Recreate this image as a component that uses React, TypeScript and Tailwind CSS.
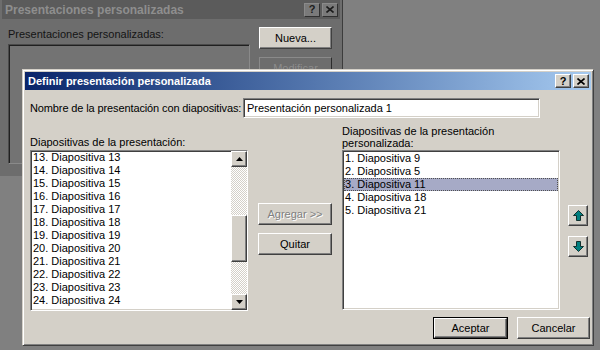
import React from "react";

const raised =
  "border border-t-white border-l-white border-r-[#404040] border-b-[#404040] shadow-[inset_-1px_-1px_#808080] bg-[#d4d0c8]";
const sunken =
  "border border-t-[#808080] border-l-[#808080] border-r-white border-b-white shadow-[inset_1px_1px_#404040,inset_-1px_-1px_#d4d0c8] bg-white";
const track =
  "bg-[repeating-conic-gradient(#ffffff_0_25%,#d4d0c8_0_50%)] bg-[length:2px_2px]";

const ScrollArrow: React.FC<{ down?: boolean }> = ({ down }) => (
  <div className={`${raised} h-[16px] flex items-center justify-center`}>
    <svg width="7" height="4" viewBox="0 0 7 4">
      {down ? <polygon points="0,0 7,0 3.5,4" fill="#000" /> : <polygon points="3.5,0 7,4 0,4" fill="#000" />}
    </svg>
  </div>
);

const MoveButton: React.FC<{ down?: boolean }> = ({ down }) => (
  <div className={`${raised} w-[20px] h-[21px] flex items-center justify-center`}>
    <svg width="11" height="11" viewBox="0 0 11 11" className={down ? "rotate-180" : ""}>
      <polygon
        points="5.5,0.5 10.5,5.5 7.5,5.5 7.5,10.5 3.5,10.5 3.5,5.5 0.5,5.5"
        fill="#008080"
        stroke="#10302e"
        strokeWidth="1"
      />
    </svg>
  </div>
);

const TitleButtons: React.FC<{ dim?: boolean }> = ({ dim }) => {
  const face = dim
    ? "border border-t-[#8a8a8a] border-l-[#8a8a8a] border-r-[#303030] border-b-[#303030] bg-[#7a7a7a]"
    : raised;
  const ink = dim ? "#1c1c1c" : "#000";
  return (
    <div className="flex items-center">
      <div className={`${face} w-[16px] h-[14px] flex items-center justify-center font-bold text-[11px] leading-none`} style={{ color: ink }}>
        ?
      </div>
      <div className={`${face} w-[16px] h-[14px] ml-[2px] flex items-center justify-center`}>
        <svg width="8" height="7" viewBox="0 0 8 7">
          <path d="M0.5 0.5 L7.5 6.5 M7.5 0.5 L0.5 6.5" stroke={ink} strokeWidth="1.6" />
        </svg>
      </div>
    </div>
  );
};

const leftItems = Array.from({ length: 12 }, (_, i) => i + 13);
const rightItems = [9, 5, 11, 18, 21];

export default function App() {
  return (
    <div className="relative w-[600px] h-[350px] overflow-hidden bg-[#808080] font-['Liberation_Sans',Arial,sans-serif] text-[11px] text-black">
      {/* background dialog, dimmed */}
      <div className="absolute left-0 top-0 w-[343px] h-[176px] bg-[#6d6d6d] border-r border-r-[#3c3c3c] px-[2px]">
        <div className="h-[19px] bg-[#5b5b5b] flex items-center justify-between pl-[3px] pr-[2px]">
          <span className="font-bold text-[12px] text-[#8e8e8e]">Presentaciones personalizadas</span>
          <TitleButtons dim />
        </div>
        <div className="flex pl-[6px] pt-[9px]">
          <div className="flex flex-col">
            <span className="text-[#141414] leading-[13px]">Presentaciones personalizadas:</span>
            <div className="mt-[3px] w-[242px] h-[120px] bg-[#737373] border border-t-[#4a4a4a] border-l-[#4a4a4a] border-r-[#8a8a8a] border-b-[#8a8a8a] shadow-[inset_1px_1px_#202020]" />
          </div>
          <div className="ml-[9px] flex flex-col gap-[8px] -mt-[1px]">
            <div className={`${raised} w-[73px] h-[22px] flex items-center justify-center`}>Nueva...</div>
            <div className="w-[73px] h-[22px] border border-t-[#8a8a8a] border-l-[#8a8a8a] border-r-[#2c2c2c] border-b-[#2c2c2c] bg-[#6d6d6d] flex items-center justify-center text-[#8c8c8c]">
              Modificar
            </div>
          </div>
        </div>
      </div>

      {/* front dialog */}
      <div className="absolute left-[22px] top-[69px] w-[572px] h-[277px] border border-t-[#d4d0c8] border-l-[#d4d0c8] border-r-[#404040] border-b-[#404040] shadow-[inset_1px_1px_#fff,inset_-1px_-1px_#808080] p-[2px] bg-[#d4d0c8] flex flex-col">
        <div className="h-[18px] bg-gradient-to-r from-[#0a246a] to-[#a6caf0] flex items-center justify-between pl-[3px] pr-[2px] shrink-0">
          <span className="font-bold text-white">Definir presentación personalizada</span>
          <TitleButtons />
        </div>

        <div className="pl-[5px] pt-[8px] flex flex-col">
          <div className="flex items-center h-[20px]">
            <span className="w-[213px] shrink-0 whitespace-nowrap tracking-[-0.12px]">Nombre de la presentación con diapositivas:</span>
            <div className={`${sunken} w-[297px] h-[20px] flex items-center pl-[3px]`}>Presentación personalizada 1</div>
          </div>

          <div className="flex">
            {/* left column */}
            <div className="flex flex-col w-[218px]">
              <div className="h-[32px] flex flex-col justify-end pb-[1px] leading-[13px]">
                <span>Diapositivas de la presentación:</span>
              </div>
              <div className={`${sunken} h-[161px] flex`}>
                <div className="flex-1 flex flex-col pl-[2px]">
                  {leftItems.map((n) => (
                    <div key={n} className="h-[13px] leading-[13px] whitespace-nowrap">
                      {n}. Diapositiva {n}
                    </div>
                  ))}
                </div>
                <div className="w-[16px] flex flex-col">
                  <ScrollArrow />
                  <div className={`${track} h-[48px]`} />
                  <div className={`${raised} h-[47px]`} />
                  <div className={`${track} flex-1`} />
                  <ScrollArrow down />
                </div>
              </div>
            </div>

            {/* middle buttons */}
            <div className="ml-[10px] w-[74px] pt-[85px] flex flex-col gap-[8px]">
              <div className={`${raised} h-[22px] flex items-center justify-center text-[#808080] [text-shadow:1px_1px_0_#fff]`}>
                Agregar &gt;&gt;
              </div>
              <div className={`${raised} h-[22px] flex items-center justify-center`}>Quitar</div>
            </div>

            {/* right column */}
            <div className="ml-[10px] flex flex-col w-[218px]">
              <div className="h-[32px] flex flex-col justify-end pb-[1px] leading-[12px]">
                <span>Diapositivas de la presentación</span>
                <span>personalizada:</span>
              </div>
              <div className={`${sunken} h-[160px] flex flex-col p-[1px] pl-[1px]`}>
                {rightItems.map((n, i) => (
                  <div
                    key={n}
                    className={`h-[13px] leading-[13px] pl-[1px] whitespace-nowrap ${
                      i === 2 ? "bg-[#a6aac6] outline-1 outline-dotted outline-[#505050] -outline-offset-1" : ""
                    }`}
                  >
                    {i + 1}. Diapositiva {n}
                  </div>
                ))}
              </div>
            </div>

            {/* move buttons */}
            <div className="ml-[8px] pt-[87px] flex flex-col gap-[10px]">
              <MoveButton />
              <MoveButton down />
            </div>
          </div>

          <div className="flex justify-end gap-[9px] mt-[6px] pr-[1px]">
            <div className="border border-black">
              <div className={`${raised} w-[73px] h-[20px] flex items-center justify-center`}>Aceptar</div>
            </div>
            <div className={`${raised} w-[73px] h-[22px] flex items-center justify-center`}>Cancelar</div>
          </div>
        </div>
      </div>
    </div>
  );
}
